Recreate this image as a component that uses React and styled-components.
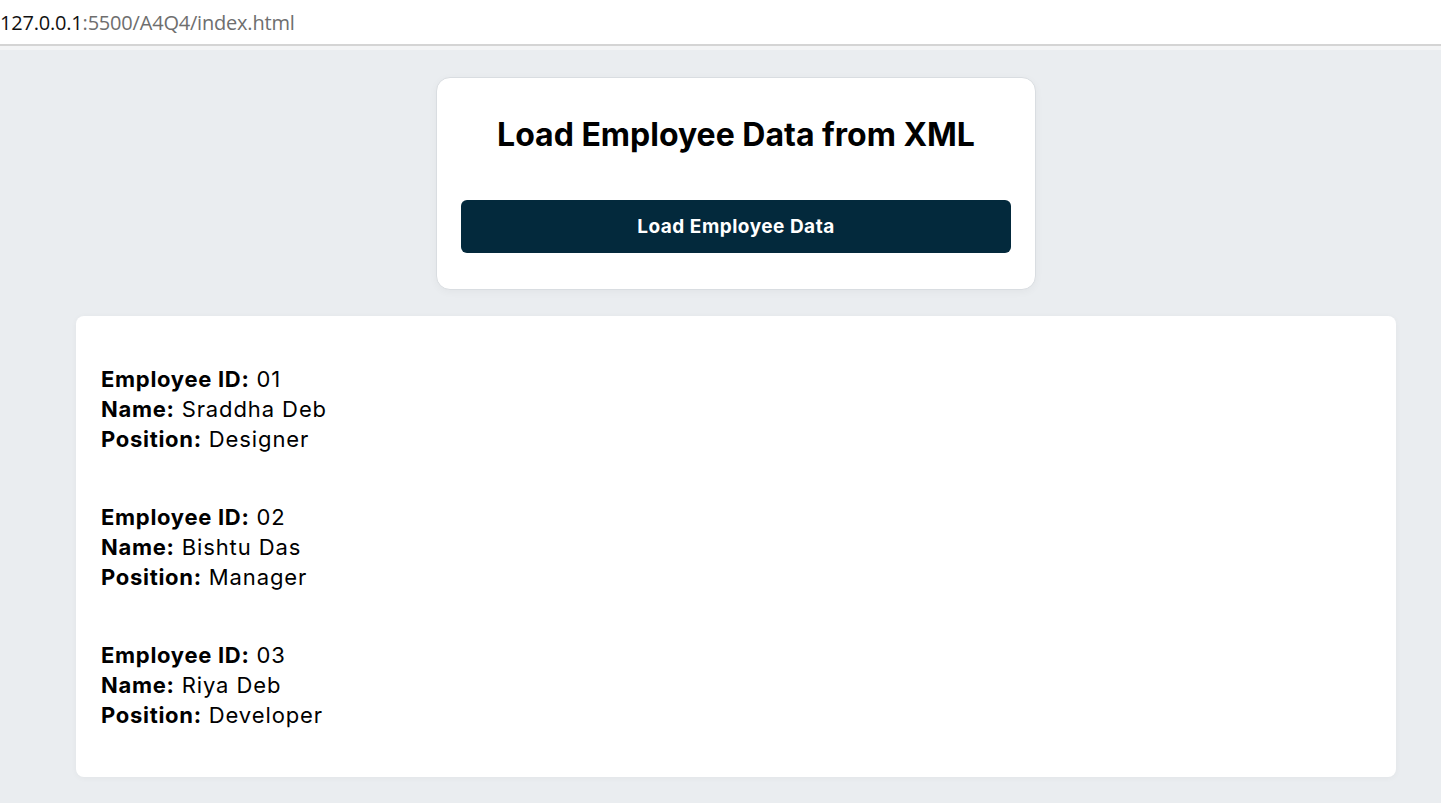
import React from 'react'
import styled, { createGlobalStyle } from 'styled-components'

const GlobalStyle = createGlobalStyle`
  html, body {
    margin: 0;
    padding: 0;
    background: #eaedf0;
  }
  body {
    font-family: Inter, "Noto Sans", "Liberation Sans", sans-serif;
    color: #000;
  }
`

const AddressBar = styled.div`
  height: 44px;
  background: #fff;
  border-bottom: 2px solid #d4d4d4;
  display: flex;
  align-items: center;
  font-family: "Open Sans", "Noto Sans", sans-serif;
  font-size: 20px;
  letter-spacing: -0.2px;
`
const Host = styled.span`
  color: #111;
`
const Path = styled.span`
  color: #6e6e6e;
`
const Strip = styled.div`
  height: 4px;
  background: #f3f4f5;
`

const Page = styled.main`
  padding: 27px 0 26px 31px;
  display: flex;
  flex-direction: column;
  align-items: center;
  gap: 26px;
`

const LoaderCard = styled.section`
  width: 600px;
  box-sizing: border-box;
  background: #fff;
  border: 1px solid #d9dde1;
  border-radius: 14px;
  padding: 24px 24px 36px;
  box-shadow: 0 2px 8px rgba(0, 0, 0, 0.04);
`
const Title = styled.h1`
  margin: 13px 0 45px;
  font-size: 32px;
  line-height: 40px;
  font-weight: 700;
  letter-spacing: 0;
  text-align: center;
`
const LoadButton = styled.button`
  display: block;
  width: 100%;
  height: 53px;
  border: none;
  border-radius: 6px;
  background: #03293c;
  color: #fff;
  font-family: inherit;
  font-size: 19px;
  font-weight: 700;
  letter-spacing: 0.5px;
  cursor: pointer;
`

const ListCard = styled.section`
  width: 1320px;
  box-sizing: border-box;
  background: #fff;
  border-radius: 8px;
  padding: 48px 25px 47px;
  display: flex;
  flex-direction: column;
  gap: 48px;
  box-shadow: 0 1px 6px rgba(0, 0, 0, 0.04);
`
const Employee = styled.div`
  font-size: 22px;
  line-height: 30px;
  letter-spacing: 0.9px;
`
const Label = styled.strong`
  font-weight: 700;
  letter-spacing: 0.7px;
`

const employees = [
  { id: '01', name: 'Sraddha Deb', position: 'Designer' },
  { id: '02', name: 'Bishtu Das', position: 'Manager' },
  { id: '03', name: 'Riya Deb', position: 'Developer' },
]

const App = () => {
  return (
    <>
      <GlobalStyle />
      <AddressBar>
        <Host>127.0.0.1</Host>
        <Path>:5500/A4Q4/index.html</Path>
      </AddressBar>
      <Strip />
      <Page>
        <LoaderCard>
          <Title>Load Employee Data from XML</Title>
          <LoadButton>Load Employee Data</LoadButton>
        </LoaderCard>
        <ListCard>
          {employees.map(e => (
            <Employee key={e.id}>
              <div><Label>Employee ID:</Label> {e.id}</div>
              <div><Label>Name:</Label> {e.name}</div>
              <div><Label>Position:</Label> {e.position}</div>
            </Employee>
          ))}
        </ListCard>
      </Page>
    </>
  )
}

export default App
